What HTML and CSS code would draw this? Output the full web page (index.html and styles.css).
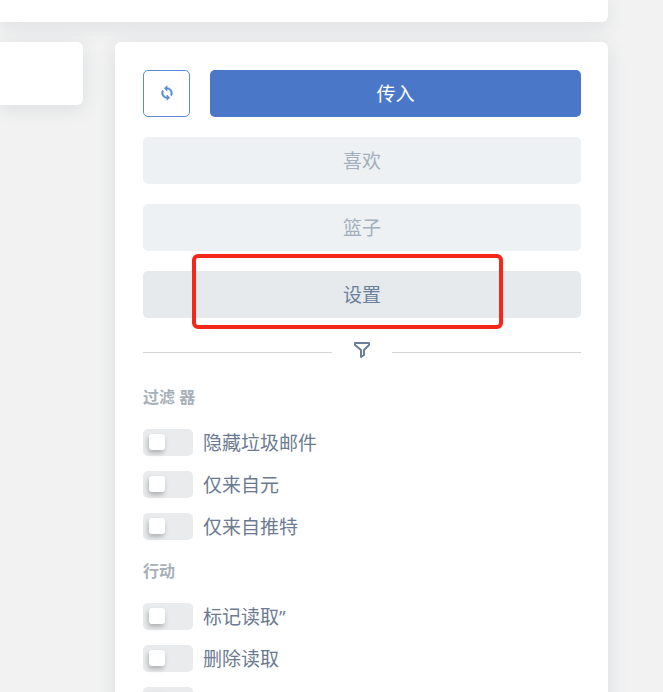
FILE: index.html
```html
<!DOCTYPE html>
<html lang="zh-CN">
<head>
    <meta charset="UTF-8">
    <meta name="viewport" content="width=device-width, initial-scale=1.0">
    <title>设置</title>
    <link rel="stylesheet" href="styles.css">
</head>
<body>
    <header class="card top-card"></header>
    <main class="columns">
        <section class="card content-card"></section>
        <aside class="card sidebar">
            <div class="menu">
                <div class="menu-row">
                    <button class="btn btn-refresh" type="button" aria-label="刷新">
                        <svg width="16" height="16" viewBox="0 0 24 24" fill="currentColor" stroke="currentColor">
                            <path d="M12 4V1L8 5l4 4V6c3.310 0 6 2.690 6 6 0 1.010-.25 1.970-.7 2.800l1.460 1.460A7.930 7.930 0 0 0 20 12c0-4.420-3.580-8-8-8zm0 14c-3.310 0-6-2.690-6-6 0-1.010.25-1.970.7-2.800L5.240 7.740A7.930 7.930 0 0 0 4 12c0 4.420 3.580 8 8 8v3l4-4-4-4v3z"/>
                        </svg>
                    </button>
                    <button class="btn btn-primary" type="button">传入</button>
                </div>
                <button class="btn btn-muted" type="button">喜欢</button>
                <button class="btn btn-muted" type="button">篮子</button>
                <div class="marked">
                    <button class="btn btn-active" type="button">设置</button>
                    <span class="marker"></span>
                </div>
            </div>

            <div class="divider">
                <svg width="18" height="18" viewBox="0 0 18 18" fill="none" stroke="currentColor" stroke-width="2" stroke-linejoin="round">
                    <path d="M2 2h14v2l-5 5v5l-3 2V9L2 4z"/>
                </svg>
            </div>

            <h2 class="group-title">过滤 器</h2>
            <div class="switches">
                <label class="switch"><input type="checkbox"><span>隐藏垃圾邮件</span></label>
                <label class="switch"><input type="checkbox"><span>仅来自元</span></label>
                <label class="switch"><input type="checkbox"><span>仅来自推特</span></label>
            </div>

            <h2 class="group-title">行动</h2>
            <div class="switches">
                <label class="switch"><input type="checkbox"><span>标记读取”</span></label>
                <label class="switch"><input type="checkbox"><span>删除读取</span></label>
                <label class="switch"><input type="checkbox"></label>
            </div>
        </aside>
    </main>
</body>
</html>
```
FILE: styles.css
```css
* {
    margin: 0;
    padding: 0;
    box-sizing: border-box;
}

body {
    height: 100vh;
    overflow: hidden;
    padding-right: 55px;
    background: #f2f2f2;
    color: #6b7a90;
    font-family: "Open Sans", "Noto Sans CJK SC", sans-serif;
    font-size: 19px;
}

.card {
    background: #fff;
    border-radius: 6px;
    box-shadow: 0 4px 20px rgba(60, 80, 95, 0.12);
}

.top-card {
    height: 22px;
    margin-bottom: 20px;
    border-radius: 0 0 6px 0;
}

.columns {
    display: grid;
    grid-template-columns: 83px 1fr;
    gap: 32px;
    align-items: start;
}

.content-card {
    height: 63px;
    border-radius: 0 6px 6px 0;
}

.sidebar {
    padding: 28px 27px 28px 28px;
}

.menu {
    display: grid;
    gap: 20px;
}

.menu-row {
    display: flex;
    gap: 20px;
}

.btn {
    display: block;
    width: 100%;
    height: 47px;
    padding-bottom: 2px;
    border: 0;
    border-radius: 5px;
    font: inherit;
    cursor: pointer;
}

.btn-refresh {
    display: flex;
    flex: 0 0 47px;
    align-items: center;
    justify-content: center;
    border: 1px solid #5b8bd6;
    background: #fff;
    color: #5b8bd6;
}

.btn-primary {
    background: #4b77c8;
    color: #fff;
}

.btn-muted {
    background: #edf1f4;
    color: #a3afbc;
}

.btn-active {
    background: #e6eaed;
    color: #6b7f9c;
}

.marked {
    position: relative;
}

.marker {
    position: absolute;
    top: -17px;
    right: 78px;
    bottom: -11px;
    left: 49px;
    border: 4px solid #f5261a;
    border-radius: 6px;
    pointer-events: none;
}

.divider {
    display: flex;
    align-items: center;
    gap: 21px;
    height: 28px;
    margin-top: 20px;
    color: #6b7f9c;
}

.divider::before,
.divider::after {
    content: "";
    flex: 1;
    height: 1px;
    background: #d3d6d9;
}

.divider svg {
    margin-bottom: 5px;
}

.group-title {
    margin: 19px 0 20px;
    color: #a8b0b9;
    font-size: 16px;
    line-height: 24px;
}

.switches {
    display: grid;
    gap: 15px;
}

.switch {
    display: flex;
    align-items: center;
    gap: 10px;
    height: 27px;
    cursor: pointer;
}

.switch span {
    padding-bottom: 2px;
}

.switch input {
    appearance: none;
    width: 50px;
    height: 27px;
    padding: 5px 6px;
    border-radius: 5px;
    background: #e9ebec;
    cursor: pointer;
}

.switch input::before {
    content: "";
    display: block;
    width: 16px;
    height: 16px;
    border-radius: 3px;
    background: #fff;
    box-shadow: -1px 3px 5px rgba(0, 0, 0, 0.25);
}

.switch input:checked {
    background: #4b77c8;
}

.switch input:checked::before {
    margin-left: auto;
}
```
